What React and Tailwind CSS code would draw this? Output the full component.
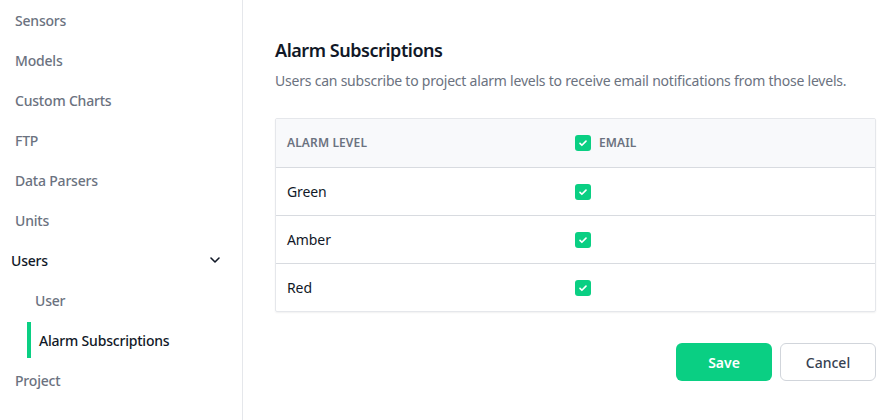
import React from "react";

const Check = () => (
  <span className="inline-flex h-4 w-4 items-center justify-center rounded-[3px] bg-[#0acf83]">
    <svg viewBox="0 0 16 16" className="h-3 w-3" fill="none" stroke="white" strokeWidth="2.2" strokeLinecap="round" strokeLinejoin="round">
      <path d="M4 8.5l2.5 2.5L12 5.5" />
    </svg>
  </span>
);

const NavItem = ({ children, className = "" }) => (
  <div className={`flex h-10 items-center text-[14px] font-medium tracking-[-0.2px] text-[#6b7280] ${className}`}>{children}</div>
);

export default function App() {
  const rows = ["Green", "Amber", "Red"];
  return (
    <div className="flex h-[420px] w-[893px] overflow-hidden bg-white" style={{ fontFamily: '"Noto Sans", "Open Sans", sans-serif' }}>
      <aside className="flex w-[243px] shrink-0 flex-col border-r border-[#e5e7eb] pt-0">
        <NavItem className="pl-[15px]">Sensors</NavItem>
        <NavItem className="pl-[15px]">Models</NavItem>
        <NavItem className="pl-[15px]">Custom Charts</NavItem>
        <NavItem className="pl-[15px]">FTP</NavItem>
        <NavItem className="pl-[15px]">Data Parsers</NavItem>
        <NavItem className="pl-[15px]">Units</NavItem>
        <div className="flex h-10 items-center justify-between pl-[11px] pr-[19px] text-[14px] font-medium tracking-[-0.2px] text-[#111827]">
          <span>Users</span>
          <svg viewBox="0 0 16 16" className="h-4 w-4" fill="none" stroke="#111827" strokeWidth="1.6" strokeLinecap="round" strokeLinejoin="round">
            <path d="M4 6l4 4 4-4" />
          </svg>
        </div>
        <NavItem className="pl-[35px]">User</NavItem>
        <div className="flex h-10 items-center pl-[27px]">
          <div className="flex h-9 items-center border-l-4 border-[#0acf83] pl-2 text-[14px] font-medium tracking-[-0.2px] text-[#111827]">
            Alarm Subscriptions
          </div>
        </div>
        <NavItem className="pl-[15px]">Project</NavItem>
      </aside>
      <main className="flex flex-1 flex-col pl-8 pr-[17px] pt-[38px]">
        <h1 className="text-[18px] font-semibold leading-6 tracking-[-0.45px] text-[#111827]">Alarm Subscriptions</h1>
        <p className="mt-[9px] text-[14px] leading-5 tracking-[-0.22px] text-[#6b7280]">
          Users can subscribe to project alarm levels to receive email notifications from those levels.
        </p>
        <div className="mt-[27px] overflow-hidden rounded-[2px] border border-[#e5e7eb] shadow-[0_1px_2px_rgba(0,0,0,0.06)]">
          <div className="flex h-12 items-center bg-[#f8f9fb] text-[12px] font-semibold uppercase tracking-[0.01em] text-[#6b7280]">
            <div className="w-[299px] pl-[11px]">Alarm Level</div>
            <div className="flex items-center gap-2">
              <Check />
              <span>Email</span>
            </div>
          </div>
          {rows.map((r) => (
            <div key={r} className="flex h-12 items-center border-t border-[#d8dbe0] text-[14px] tracking-[-0.1px] text-[#111827]">
              <div className="w-[299px] pl-[11px]">{r}</div>
              <Check />
            </div>
          ))}
        </div>
        <div className="mt-[31px] flex justify-end gap-2">
          <button className="h-[38px] w-24 rounded-md bg-[#0acf83] text-[14px] font-semibold text-white">Save</button>
          <button className="h-[38px] w-24 rounded-md border border-[#d1d5db] bg-white text-[14px] font-medium text-[#374151]">Cancel</button>
        </div>
      </main>
    </div>
  );
}
